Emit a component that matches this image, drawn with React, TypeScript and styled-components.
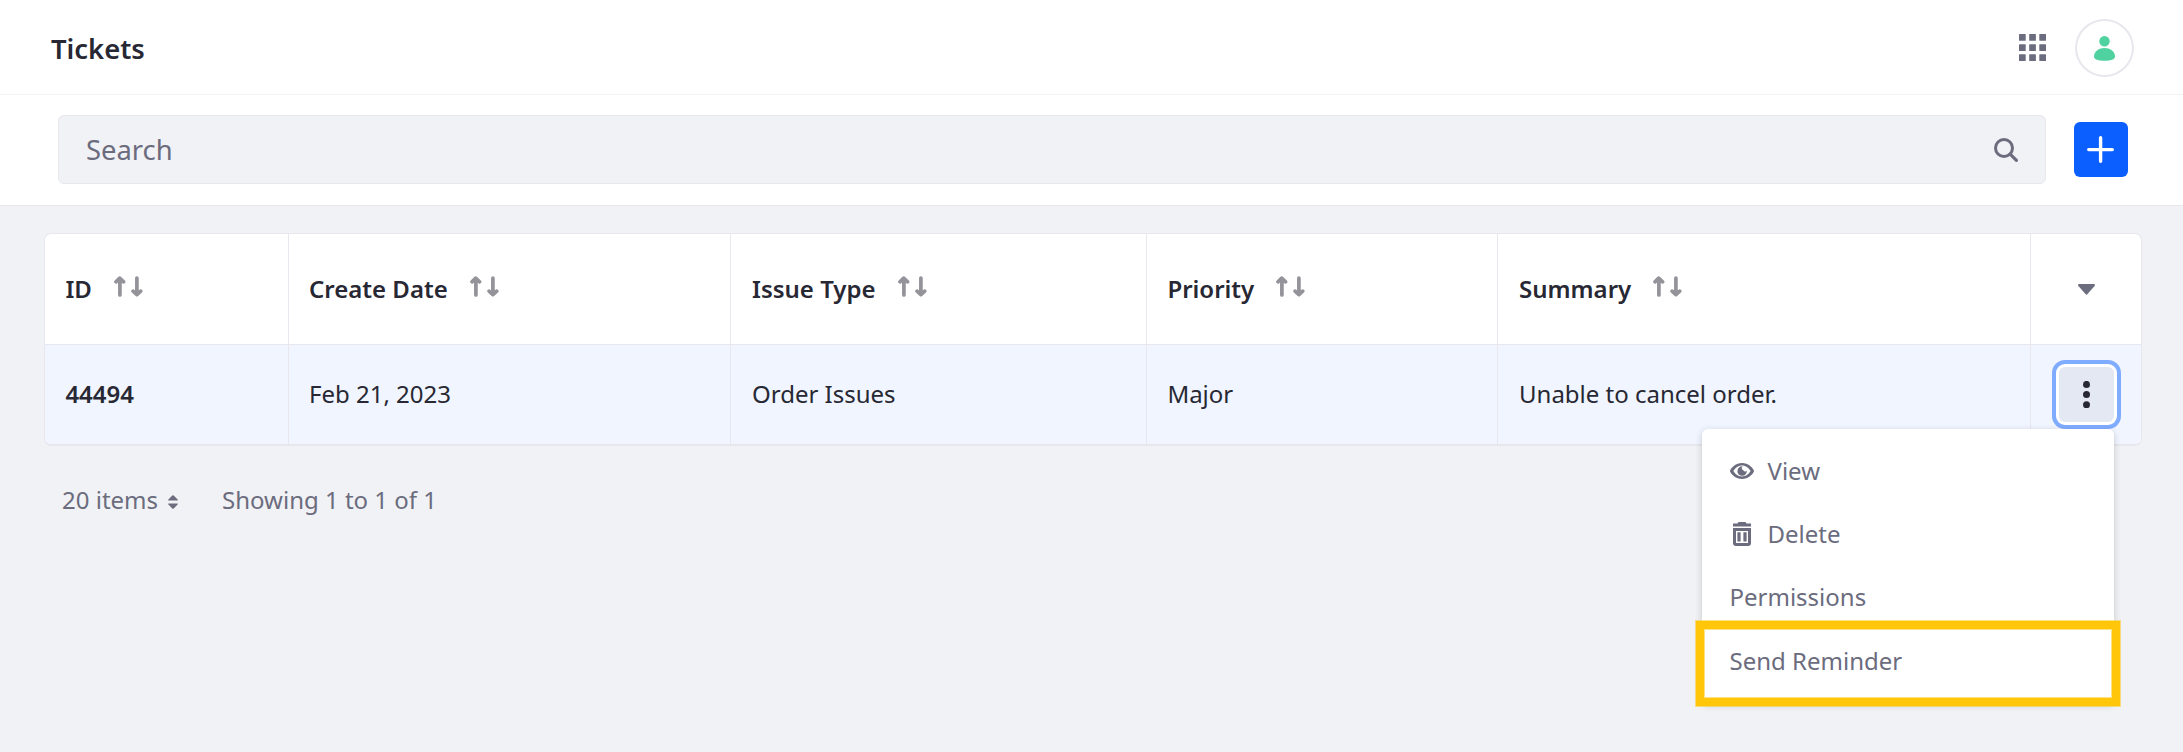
import React from 'react';
import styled, { createGlobalStyle } from 'styled-components';

const colors = {
  text: '#272833',
  muted: '#6b6c7e',
  border: '#e7e7ed',
  canvas: '#f1f2f5',
  primary: '#0b5fff',
  active: '#f0f5ff',
};

const GlobalStyle = createGlobalStyle`
  *, *::before, *::after { box-sizing: border-box; }
  body {
    margin: 0;
    background: ${colors.canvas};
    color: ${colors.text};
    font-family: 'Noto Sans', sans-serif;
    font-size: 24px;
    line-height: 36px;
  }
  button { font: inherit; color: inherit; padding: 0; border: 0; background: none; }
  svg { display: block; flex: none; }
`;

const Page = styled.div`
  min-height: 752px;
  background: ${colors.canvas};
`;

const Header = styled.header`
  display: flex;
  align-items: center;
  height: 95px;
  padding: 1px 49px 0 51px;
  background: #fff;
  border-bottom: 1px solid ${colors.canvas};
`;

const Title = styled.h1`
  flex: 1;
  margin: 0;
  padding-top: 3px;
  font-size: 27.4px;
  font-weight: 600;
`;

const Avatar = styled.div`
  display: flex;
  align-items: center;
  justify-content: center;
  width: 59px;
  height: 58px;
  margin: 1px 0 0 29px;
  border: 2px solid ${colors.border};
  border-radius: 50%;
`;

const Toolbar = styled.div`
  display: flex;
  align-items: center;
  gap: 28px;
  height: 111px;
  padding: 0 55px 1px 58px;
  background: #fff;
  border-bottom: 1px solid ${colors.border};
`;

const SearchBox = styled.label`
  display: flex;
  align-items: center;
  flex: 1;
  height: 69px;
  padding: 0 27px;
  background: ${colors.canvas};
  border: 1px solid ${colors.border};
  border-radius: 6px;
`;

const SearchInput = styled.input`
  flex: 1;
  min-width: 0;
  padding: 0;
  border: 0;
  outline: 0;
  background: transparent;
  font: inherit;
  font-size: 27.4px;
  &::placeholder { color: ${colors.muted}; opacity: 1; }
`;

const AddButton = styled.button`
  display: flex;
  align-items: center;
  justify-content: center;
  width: 54px;
  height: 55px;
  background: ${colors.primary};
  border-radius: 6px;
`;

const Content = styled.main`
  padding: 27px 41px 0 44px;
`;

const Table = styled.div`
  border: 1px solid ${colors.border};
  border-bottom-width: 2px;
  border-radius: 7px;
  background: #fff;
`;

const Row = styled.div<{ $active?: boolean }>`
  display: grid;
  grid-template-columns: 243px 442px 416px 351px 533px 1fr;
  height: ${(p) => (p.$active ? 99 : 111)}px;
  background: ${(p) => (p.$active ? colors.active : 'transparent')};
  border-bottom: ${(p) => (p.$active ? 0 : 1)}px solid ${colors.border};
  border-radius: ${(p) => (p.$active ? '0 0 6px 6px' : 0)};
`;

const Cell = styled.div<{ $strong?: boolean; $center?: boolean; $inset?: number }>`
  display: flex;
  align-items: center;
  justify-content: ${(p) => (p.$center ? 'center' : 'flex-start')};
  padding: 0 0 0 ${(p) => p.$inset ?? 0}px;
  font-weight: ${(p) => (p.$strong ? 600 : 400)};
  & + & { border-left: 1px solid ${colors.border}; }
`;

const CellText = styled.span`
  padding-bottom: 2px;
`;

const SortButton = styled.button`
  margin: -5px 0 0 22px;
`;

const MenuAnchor = styled.div`
  position: relative;
`;

const KebabButton = styled.button`
  display: flex;
  align-items: center;
  justify-content: center;
  width: 55px;
  height: 55px;
  background: #e4e8f3;
  border-radius: 6px;
  box-shadow: 0 0 0 3px #fff, 0 0 0 7px #80acff;
`;

const Menu = styled.div`
  position: absolute;
  z-index: 2;
  top: calc(100% + 7px);
  right: 0;
  width: 412px;
  height: 274px;
  padding: 10px 0;
  background: #fff;
  border-radius: 6px;
  box-shadow: 0 2px 7px rgba(39, 40, 51, 0.22);
  color: ${colors.muted};
`;

const MenuItem = styled.div`
  display: flex;
  align-items: center;
  gap: 14px;
  height: 63.3px;
  padding: 0 28px;
  white-space: nowrap;
`;

const Highlight = styled.div`
  position: absolute;
  top: 192px;
  left: -6px;
  width: 424px;
  height: 85px;
  border: 8px solid #ffc60a;
  box-shadow: 0 0 0 1px rgba(255, 198, 10, 0.5), inset 0 0 0 1px rgba(255, 198, 10, 0.5);
`;

const Pagination = styled.footer`
  display: flex;
  align-items: center;
  padding: 36px 18px 0;
  color: ${colors.muted};
`;

const PageSize = styled.button`
  display: flex;
  align-items: center;
  gap: 10px;
  margin-right: 44px;
  svg { margin-top: 3px; }
`;

const GridIcon = () => (
  <svg width="27" height="27" viewBox="0 0 27 27" fill={colors.muted}>
    {[0, 10.2, 20.3].map((y) =>
      [0, 10.2, 20.3].map((x) => <rect key={`${x}-${y}`} x={x} y={y} width="6.7" height="6.7" rx="0.5" />),
    )}
  </svg>
);

const UserIcon = () => (
  <svg width="21" height="25" viewBox="0 0 21 25" fill="#50d2a0">
    <circle cx="10.5" cy="5.3" r="5.2" />
    <path d="M10.5 12C15.8 12 21 15.3 21 20.3C21 23.7 16.5 24.8 10.5 24.8S0 23.7 0 20.3C0 15.3 5.2 12 10.5 12Z" />
  </svg>
);

const SearchIcon = () => (
  <svg width="24" height="24" viewBox="0 0 24 24" fill="none" stroke={colors.muted}>
    <circle cx="10" cy="10" r="8.5" strokeWidth="3" />
    <path d="M16.2 16.2L22.4 22.4" strokeWidth="3.2" strokeLinecap="round" />
  </svg>
);

const PlusIcon = () => (
  <svg width="28" height="27" viewBox="0 0 28 27" stroke="#fff" strokeWidth="3.4" strokeLinecap="round">
    <path d="M13.6 1.7V25.3M1.7 13.6H25.3" />
  </svg>
);

const SortIcon = () => (
  <svg width="29" height="21" viewBox="0 0 29 21" fill="none" stroke="#939399" strokeWidth="3.7" strokeLinecap="round" strokeLinejoin="round">
    <path d="M5.9 2.5V19M2 5.8L5.7 2.2L9.6 5.8" />
    <path d="M22.9 2V18.5M19.1 15.1L22.9 18.7L26.7 15.1" />
  </svg>
);

const CaretIcon = () => (
  <svg width="17" height="11" viewBox="0 0 17 11" fill={colors.muted}>
    <path d="M1.2 0H15.8C17 0 17.4 1.1 16.6 1.9L9.5 10.1C8.9 10.8 8.1 10.8 7.5 10.1L.4 1.9C-.4 1.1 0 0 1.2 0Z" />
  </svg>
);

const CaretDoubleIcon = () => (
  <svg width="10" height="14" viewBox="0 0 10 14" fill={colors.muted}>
    <path d="M.8 5.6C0 5.6 0 4.9.4 4.5L4.3.5Q5 0 5.7.5L9.6 4.5C10 4.9 10 5.6 9.2 5.6Z" />
    <path d="M.8 8.4C0 8.4 0 9.1.4 9.5L4.3 13.5Q5 14 5.7 13.5L9.6 9.5C10 9.1 10 8.4 9.2 8.4Z" />
  </svg>
);

const KebabIcon = () => (
  <svg width="7" height="27" viewBox="0 0 7 27" fill={colors.text}>
    <circle cx="3.5" cy="3.4" r="3.5" />
    <circle cx="3.5" cy="13.6" r="3.5" />
    <circle cx="3.5" cy="23.8" r="3.5" />
  </svg>
);

const EyeIcon = () => (
  <svg width="24" height="24" viewBox="0 0 24 24" fill={colors.muted}>
    <path
      fillRule="evenodd"
      d="M12 4C5.8 4 1.7 8.5.3 11Q-.2 12 .3 13C1.7 15.5 5.8 20 12 20S22.3 15.5 23.7 13Q24.2 12 23.7 11C22.3 8.5 18.2 4 12 4ZM12 6.6C16 6.6 19 9.3 20.6 12C19 14.7 16 17.4 12 17.4S5 14.7 3.4 12C5 9.3 8 6.6 12 6.6Z"
    />
    <path d="M12.6 7.4A4.7 4.7 0 1 0 16.8 11.6A2 2 0 0 1 13.2 11A2 2 0 0 1 12.6 7.4Z" />
  </svg>
);

const TrashIcon = () => (
  <svg width="24" height="24" viewBox="0 0 24 24" fill={colors.muted}>
    <path d="M3 1.4H7.6Q8 0 9.2 0H14.8Q16 0 16.4 1.4H21V4.5H3Z" />
    <path fillRule="evenodd" d="M3 6H21V21Q21 24 18 24H6Q3 24 3 21ZM6 9V21H18V9Z" />
    <path d="M7.4 10.3H10.6V19.6H7.4ZM13.4 10.3H16.6V19.6H13.4Z" />
  </svg>
);

const columns = [
  { name: 'ID', value: '44494', inset: 20.4 },
  { name: 'Create Date', value: 'Feb 21, 2023', inset: 20 },
  { name: 'Issue Type', value: 'Order Issues', inset: 21 },
  { name: 'Priority', value: 'Major', inset: 20.4 },
  { name: 'Summary', value: 'Unable to cancel order.', inset: 21 },
];

export default function App() {
  return (
    <Page>
      <GlobalStyle />
      <Header>
        <Title>Tickets</Title>
        <GridIcon />
        <Avatar>
          <UserIcon />
        </Avatar>
      </Header>
      <Toolbar>
        <SearchBox>
          <SearchInput placeholder="Search" />
          <SearchIcon />
        </SearchBox>
        <AddButton aria-label="Add">
          <PlusIcon />
        </AddButton>
      </Toolbar>
      <Content>
        <Table>
          <Row>
            {columns.map(({ name, inset }) => (
              <Cell key={name} $strong $inset={inset}>
                {name}
                <SortButton aria-label={`Sort by ${name}`}>
                  <SortIcon />
                </SortButton>
              </Cell>
            ))}
            <Cell $center>
              <CaretIcon />
            </Cell>
          </Row>
          <Row $active>
            {columns.map(({ name, value, inset }) => (
              <Cell key={name} $strong={name === 'ID'} $inset={inset}>
                <CellText>{value}</CellText>
              </Cell>
            ))}
            <Cell $center>
              <MenuAnchor>
                <KebabButton aria-label="Actions">
                  <KebabIcon />
                </KebabButton>
                <Menu>
                  <MenuItem>
                    <EyeIcon />
                    View
                  </MenuItem>
                  <MenuItem>
                    <TrashIcon />
                    Delete
                  </MenuItem>
                  <MenuItem>Permissions</MenuItem>
                  <MenuItem>Send Reminder</MenuItem>
                  <Highlight />
                </Menu>
              </MenuAnchor>
            </Cell>
          </Row>
        </Table>
        <Pagination>
          <PageSize>
            20 items
            <CaretDoubleIcon />
          </PageSize>
          Showing 1 to 1 of 1
        </Pagination>
      </Content>
    </Page>
  );
}
